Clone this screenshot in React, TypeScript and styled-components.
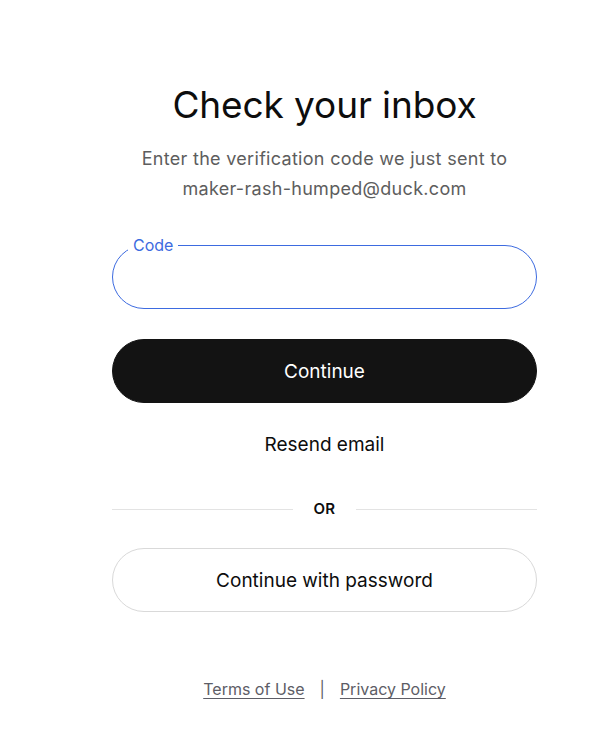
import React from "react"
import styled, { createGlobalStyle } from "styled-components"

const GlobalStyle = createGlobalStyle`
  html, body {
    margin: 0;
    padding: 0;
    background: #ffffff;
  }
  body {
    font-family: Inter, "Noto Sans", "Liberation Sans", sans-serif;
    color: #0d0d0d;
    -webkit-font-smoothing: antialiased;
  }
`

const Page = styled.main`
  display: flex;
  justify-content: flex-start;
  padding: 83px 75px 0 112px;
  min-height: 732px;
  box-sizing: border-box;
`

const Column = styled.section`
  display: flex;
  flex-direction: column;
  width: 425px;
`

const Title = styled.h1`
  margin: 0;
  font-size: 37px;
  line-height: 43px;
  font-weight: 400;
  letter-spacing: -0.1px;
  text-align: center;
  color: #0d0d0d;
`

const Subtitle = styled.p`
  margin: 18px 0 0;
  font-size: 18px;
  line-height: 30px;
  letter-spacing: 0.3px;
  color: #5d5d5d;
  text-align: center;
`

const Field = styled.div`
  position: relative;
  margin-top: 41px;
  height: 64px;
  box-sizing: border-box;
  padding: 0 22px;
  border: 1px solid #3d6be0;
  border-radius: 32px;
  display: flex;
  align-items: center;
`

/* floating label sitting on the field's top border */
const FloatingLabel = styled.label`
  position: absolute;
  top: -11px;
  left: 15px;
  padding: 0 5px;
  background: #ffffff;
  font-size: 16px;
  line-height: 20px;
  color: #3d6be0;
`

const CodeInput = styled.input`
  display: block;
  width: 100%;
  height: 40px;
  border: 0;
  outline: none;
  background: transparent;
  font: inherit;
  font-size: 18px;
`

const PillButton = styled.button<{ $variant: "solid" | "outline" }>`
  display: flex;
  align-items: center;
  justify-content: center;
  width: 100%;
  height: 64px;
  margin-top: 30px;
  border-radius: 32px;
  font-family: inherit;
  font-size: 19px;
  cursor: pointer;
  border: 1px solid ${(p) => (p.$variant === "solid" ? "#131313" : "#d9d9d9")};
  background: ${(p) => (p.$variant === "solid" ? "#131313" : "#ffffff")};
  color: ${(p) => (p.$variant === "solid" ? "#ffffff" : "#0d0d0d")};
`

const LinkButton = styled.button`
  align-self: center;
  margin-top: 31px;
  padding: 0;
  border: 0;
  background: none;
  font-family: inherit;
  font-size: 19px;
  line-height: 22px;
  color: #0d0d0d;
  cursor: pointer;
`

const Divider = styled.div`
  display: flex;
  align-items: center;
  margin-top: 44px;

  &::before,
  &::after {
    content: "";
    flex: 1;
    height: 1px;
    background: #e3e3e3;
  }
`

const DividerLabel = styled.span`
  width: 63px;
  text-align: center;
  font-size: 15px;
  font-weight: 600;
  letter-spacing: 0.4px;
  line-height: 18px;
  color: #0d0d0d;
`

const Footer = styled.footer`
  display: flex;
  justify-content: center;
  align-items: center;
  gap: 15px;
  margin-top: 67px;
  font-size: 16px;
  color: #5d5d66;
`

const FooterLink = styled.a`
  color: #5d5d66;
  text-decoration: underline;
  text-underline-offset: 3px;
`

const Sep = styled.span`
  color: #5d5d66;
`

export default function App() {
  return (
    <>
      <GlobalStyle />
      <Page>
        <Column>
          <Title>Check your inbox</Title>
          <Subtitle>
            Enter the verification code we just sent to
            <br />
            maker-rash-humped@duck.com
          </Subtitle>
          <Field>
            <FloatingLabel htmlFor="code">Code</FloatingLabel>
            <CodeInput id="code" />
          </Field>
          <PillButton $variant="solid">Continue</PillButton>
          <LinkButton>Resend email</LinkButton>
          <Divider>
            <DividerLabel>OR</DividerLabel>
          </Divider>
          <PillButton $variant="outline">Continue with password</PillButton>
          <Footer>
            <FooterLink href="#">Terms of Use</FooterLink>
            <Sep>|</Sep>
            <FooterLink href="#">Privacy Policy</FooterLink>
          </Footer>
        </Column>
      </Page>
    </>
  )
}
